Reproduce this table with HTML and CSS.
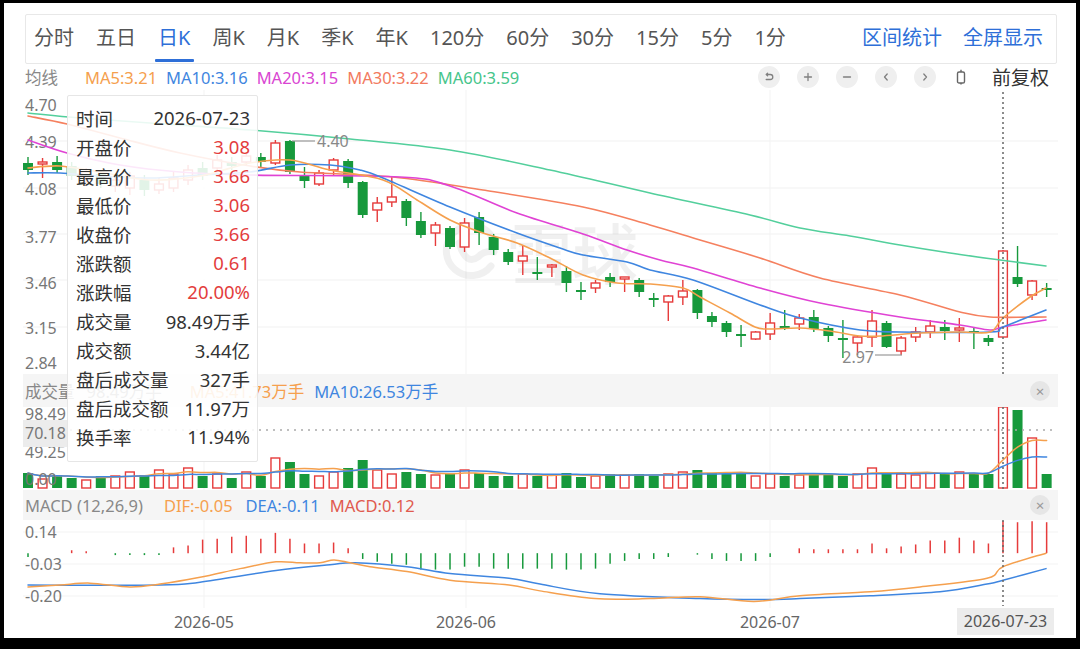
FILE: index.html
```html
<!DOCTYPE html>
<html lang="zh-CN">
<head>
<meta charset="utf-8">
<title>日K</title>
<link rel="stylesheet" href="styles.css">
</head>
<body>
<div class="frame">
  <nav class="tabs">
    <div class="tab-list">
      <span class="tab">分时</span>
      <span class="tab">五日</span>
      <span class="tab active">日K</span>
      <span class="tab">周K</span>
      <span class="tab">月K</span>
      <span class="tab">季K</span>
      <span class="tab">年K</span>
      <span class="tab">120分</span>
      <span class="tab">60分</span>
      <span class="tab">30分</span>
      <span class="tab">15分</span>
      <span class="tab">5分</span>
      <span class="tab">1分</span>
    </div>
    <div class="tab-links">
      <span class="link">区间统计</span>
      <span class="link">全屏显示</span>
    </div>
  </nav>

  <div class="legend-row">
    <div class="legend">
      <span class="legend-title">均线</span>
      <span class="c-ma5">MA5:3.21</span>
      <span class="c-ma10">MA10:3.16</span>
      <span class="c-ma20">MA20:3.15</span>
      <span class="c-ma30">MA30:3.22</span>
      <span class="c-ma60">MA60:3.59</span>
    </div>
    <div class="tools">
      <span class="tool-btn"><svg class="ico" viewBox="0 0 12 12"><path d="M3.2 3.5H7.3a2.5 2.5 0 0 1 0 5H3.2M4.6 2.1L3.2 3.5 4.6 4.9"/></svg></span>
      <span class="tool-btn"><svg class="ico" viewBox="0 0 12 12"><path d="M6 2.5v7M2.5 6h7"/></svg></span>
      <span class="tool-btn"><svg class="ico" viewBox="0 0 12 12"><path d="M2.5 6h7"/></svg></span>
      <span class="tool-btn"><svg class="ico" viewBox="0 0 12 12"><path d="M7.2 3L4.5 6l2.7 3"/></svg></span>
      <span class="tool-btn"><svg class="ico" viewBox="0 0 12 12"><path d="M4.8 3L7.5 6 4.8 9"/></svg></span>
      <span class="tool-icon"><svg class="ico-dark" viewBox="0 0 10 16"><rect x="1.5" y="3" width="7" height="11" rx="1.6"/><path d="M5 0.8v2.2M5 14v1.4"/></svg></span>
      <span class="fq">前复权</span>
    </div>
  </div>

  <div class="chart">
    <svg id="main" class="pane pane-main" viewBox="23 90 1035 284"></svg>
    <div class="band band-vol">
      <span class="band-title">成交量</span>
      <span class="c-gray vol-now">98.49万手</span>
      <span class="c-ma5 vol-ma5">MA5:41.73万手</span>
      <span class="c-ma10">MA10:26.53万手</span>
      <span class="close">×</span>
    </div>
    <svg id="vol" class="pane pane-vol" viewBox="23 407 1035 83"></svg>
    <div class="band band-macd">
      <span class="band-title">MACD (12,26,9)</span>
      <span class="c-ma5">DIF:-0.05</span>
      <span class="c-ma10">DEA:-0.11</span>
      <span class="c-macd">MACD:0.12</span>
      <span class="close">×</span>
    </div>
    <svg id="macd" class="pane pane-macd" viewBox="23 520 1035 88"></svg>
    <svg id="xaxis" class="pane pane-x" viewBox="23 608 1035 30"></svg>

    <div class="tooltip">
      <div class="tip-row"><span>时间</span><span>2026-07-23</span></div>
      <div class="tip-row"><span>开盘价</span><span class="up">3.08</span></div>
      <div class="tip-row"><span>最高价</span><span class="up">3.66</span></div>
      <div class="tip-row"><span>最低价</span><span class="up">3.06</span></div>
      <div class="tip-row"><span>收盘价</span><span class="up">3.66</span></div>
      <div class="tip-row"><span>涨跌额</span><span class="up">0.61</span></div>
      <div class="tip-row"><span>涨跌幅</span><span class="up">20.00%</span></div>
      <div class="tip-row"><span>成交量</span><span>98.49万手</span></div>
      <div class="tip-row"><span>成交额</span><span>3.44亿</span></div>
      <div class="tip-row"><span>盘后成交量</span><span>327手</span></div>
      <div class="tip-row"><span>盘后成交额</span><span>11.97万</span></div>
      <div class="tip-row"><span>换手率</span><span>11.94%</span></div>
    </div>
  </div>
</div>
<script src="script.js"></script>
</body>
</html>
```

FILE: styles.css
```css
html, body {
  margin: 0;
  padding: 0;
  background: #000;
}
body {
  width: 1080px;
  height: 649px;
  overflow: hidden;
  font-family: "Noto Sans", "Noto Sans CJK SC", sans-serif;
  color: #333;
}
.frame {
  margin: 3px 4px 0 4px;
  height: 635px;
  background: #fff;
  box-sizing: border-box;
  padding: 11px 19px 0 21px;
  display: flex;
  flex-direction: column;
  position: relative;
}

/* tabs */
.tabs {
  height: 50px;
  box-sizing: border-box;
  border: 1px solid #e8e8e8;
  border-radius: 2px;
  display: flex;
  justify-content: space-between;
  align-items: stretch;
  padding: 0 13px 0 5px;
  flex: none;
}
.tab-list {
  display: flex;
  gap: 16px;
}
.tab {
  display: flex;
  align-items: center;
  padding: 0 3px 5px;
  font-size: 20px;
  color: #555;
  position: relative;
}
.tab.active {
  color: #2e6fd8;
}
.tab.active::after {
  content: "";
  position: absolute;
  left: 0;
  right: -1px;
  bottom: 1px;
  height: 3px;
  border-radius: 1px;
  background: #2e6fd8;
}
.tab-links {
  display: flex;
  align-items: center;
  gap: 21px;
  padding-bottom: 5px;
}
.link {
  font-size: 20px;
  color: #2e6fd8;
}

/* legend row */
.legend-row {
  height: 26px;
  flex: none;
  display: flex;
  align-items: center;
  justify-content: space-between;
  padding-right: 8px;
}
.legend {
  display: flex;
  align-items: center;
  gap: 9px;
  font-size: 16.5px;
}
.legend-title {
  color: #888;
  margin-right: 18px;
}
.c-ma5 { color: #f5a04e; }
.c-ma10 { color: #3f86e0; }
.c-ma20 { color: #d946d2; }
.c-ma30 { color: #f27a5e; }
.c-ma60 { color: #46c58b; }
.c-macd { color: #e05a4e; }
.c-gray { color: #888; }

.tools {
  display: flex;
  align-items: center;
  gap: 17px;
}
.tool-btn {
  width: 22px;
  height: 22px;
  border-radius: 50%;
  background: #efefef;
  display: flex;
  align-items: center;
  justify-content: center;
}
.ico {
  width: 12px;
  height: 12px;
  fill: none;
  stroke: #808080;
  stroke-width: 1.3;
  stroke-linecap: round;
  stroke-linejoin: round;
}
.tool-icon {
  display: flex;
  margin-left: 3px;
}
.ico-dark {
  width: 10px;
  height: 16px;
  fill: none;
  stroke: #666;
  stroke-width: 1.4;
}
.fq {
  font-size: 19px;
  color: #333;
  margin-left: 9px;
}

/* chart */
.chart {
  position: relative;
  margin: 0 -1px 0 -2px;
  display: flex;
  flex-direction: column;
  flex: none;
}
.pane {
  display: block;
  width: 1035px;
  flex: none;
}
.pane-main { height: 284px; }
.pane-vol { height: 83px; }
.pane-macd { height: 88px; }
.pane-x { height: 30px; }

.band {
  height: 33px;
  flex: none;
  box-sizing: border-box;
  background: #f5f5f5;
  display: flex;
  align-items: center;
  padding: 0 8px 0 2px;
  font-size: 16.5px;
}
.band-vol .band-title { margin-right: 12px; }
.band-vol .vol-now { margin-right: 28px; }
.band-vol .vol-ma5 { margin-right: 10px; }
.band-macd {
  height: 30px;
}
.band-macd .band-title { margin-right: 21px; }
.band-macd .c-ma5 { margin-right: 13px; }
.band-macd .c-ma10 { margin-right: 10px; }
.band-title {
  color: #888;
}
.close {
  margin-left: auto;
  width: 20px;
  height: 20px;
  border-radius: 50%;
  background: #e6e6e6;
  color: #999;
  font-size: 15px;
  line-height: 20px;
  text-align: center;
}

.pane text {
  font-family: "Noto Sans", "Noto Sans CJK SC", sans-serif;
}
.axis {
  font-size: 16px;
  fill: #777;
}
.note {
  font-size: 16px;
  fill: #888;
}
.wm-text {
  font-family: "Noto Sans CJK SC", sans-serif;
  font-size: 66px;
  font-weight: 500;
  fill: #000;
  fill-opacity: 0.06;
}
.xlabel {
  font-size: 16px;
  fill: #666;
}
.xlabel-cur {
  font-size: 16px;
  fill: #555;
}

/* tooltip */
.tooltip {
  position: absolute;
  left: 44px;
  top: 5px;
  width: 191px;
  box-sizing: border-box;
  padding: 7px 7px 10px 8px;
  background: rgba(255, 255, 255, 0.88);
  border: 1px solid #e6e6e6;
  border-radius: 2px;
  font-size: 18.5px;
  color: #333;
}
.tip-row {
  height: 29px;
  display: flex;
  align-items: center;
  justify-content: space-between;
  white-space: nowrap;
}
.up {
  color: #e33d3d;
}
```

FILE: script.js
```js
(function () {
  var RED = '#e63b3b', GREEN = '#17993c';
  var ORANGE = '#f5a04e', BLUE = '#3f86e0';
  var X0 = 28, DX = 14.552;
  function X(i) { return +(X0 + i * DX).toFixed(2); }

  // [up, bodyTop, bodyBottom, wickTop, wickBottom] in pixel coords
  var candles = [
    [0,163,170,157,175],[1,162,164,158,178],[0,162,170,156,173],[0,166,176,162,180],
    [1,172,178,168,183],[0,174,184,170,188],[1,180,186,176,192],[1,176,188,172,195],
    [0,180,190,175,196],[1,184,190,178,194],[1,178,188,172,192],[1,170,180,165,185],
    [0,168,176,162,180],[1,160,168,155,172],[0,162,166,157,170],[1,156,162,152,166],
    [0,157,162,153,167],[1,143,163,140,165],[0,141,172,140,174],[0,175,181,167,188],
    [1,173,184,170,186],[1,160,170,158,176],[0,161,183,159,188],[0,182,215,181,218],
    [1,203,210,197,222],[1,197,202,177,207],[0,201,218,199,226],[0,221,235,212,238],
    [1,225,233,222,246],[0,228,247,226,249],[1,223,247,218,252],[0,217,233,212,245],
    [0,237,250,234,255],[0,252,262,249,265],[1,256,261,245,275],[0,272,274,257,280],
    [1,265,267,264,277],[0,271,283,266,292],[0,290,292,282,300],[1,283,288,280,293],
    [0,277,282,273,287],[1,277,279,277,292],[0,280,292,278,297],[0,298,300,293,307],
    [1,296,302,295,321],[1,291,297,280,305],[0,290,313,289,319],[0,316,322,312,327],
    [0,323,332,321,337],[0,334,336,325,347],[1,332,339,331,340],[1,323,334,313,340],
    [0,326,328,310,330],[1,318,324,314,330],[0,317,329,310,332],[0,328,336,326,342],
    [0,338,340,320,358],[1,337,343,336,355],[1,321,337,310,347],[0,323,347,321,348],
    [1,338,351,336,355],[1,332,337,327,342],[1,326,332,320,338],[0,327,331,320,340],
    [1,328,330,318,342],[0,331,333,328,349],[0,338,342,335,346],[1,251,337,250,337],
    [0,277,284,246,287],[1,281,295,280,300],[0,288,290,283,297]
  ];

  var vols = [15,9,13,10,8,12,12,16,13,18,14,20,12,14,10,16,12,30,26,14,12,16,20,28,18,14,16,14,13,14,
    18,15,12,12,14,12,13,15,11,12,14,13,14,12,14,16,18,15,14,16,12,14,12,13,15,14,12,14,20,16,
    14,13,15,14,16,15,14,81,78,50,14];

  var hist = [560,null,null,553,554,null,558,558,558,558,550,548,542,541,539,538,541,535,541,546,
    546,545,551,562,565,567,568,573,573,573,570,570,572,572,572,572,572,573,573,572,567,564,562,562,
    560,null,557,562,564,564,564,560,null,551,552,552,552,552,546,551,549,547,543,543,540,543,546,
    523,524,523,524];

  var MA = {
    ma60: [[28,113],[80,118],[150,123],[250,130],[350,139],[450,150],[550,170],[650,193],[750,215],
      [800,228],[850,236],[900,245],[950,253],[1000,260],[1046,266]],
    ma30: [[28,116],[67,124],[120,138],[180,153],[250,166],[300,172],[393,177],[483,190],[583,207],
      [650,225],[700,240],[760,258],[820,278],[900,295],[960,312],[990,317],[1046,317]],
    ma20: [[28,140],[67,153],[120,165],[180,172],[250,175],[400,177],[450,186],[517,213],[583,234],
      [627,250],[660,260],[693,268],[760,288],[820,303],[900,317],[960,325],[990,330],[1003,327],[1046,320]],
    ma10: [[28,173],[60,173],[100,176],[150,178],[200,175],[250,172],[290,165],[330,165],[360,170],
      [383,178],[450,207],[517,233],[560,248],[583,255],[627,262],[650,270],[693,280],[760,305],
      [800,318],[860,330],[900,332],[990,332],[1003,327],[1046,310]],
    ma5: [[28,168],[60,166],[100,172],[150,180],[200,176],[250,163],[290,160],[330,170],[383,180],
      [417,200],[450,220],[483,233],[517,243],[550,258],[583,275],[617,283],[650,284],[683,288],
      [700,297],[730,313],[755,327],[770,329],[800,328],[830,331],[860,336],[880,336],[920,333],
      [960,332],[990,332],[1003,318],[1030,297],[1046,288]]
  };
  var MA_COL = { ma60: '#53cf9c', ma30: '#f5805f', ma20: '#e043d4', ma10: BLUE, ma5: ORANGE };

  var DIF = [[28,591],[60,589],[90,587],[130,591],[160,588],[200,581],[240,572],[276,565],[300,566],
    [320,566],[334,563],[350,566],[370,570],[407,575],[450,584],[509,589],[540,595],[595,603],
    [650,603],[700,601],[754,606],[800,600],[870,596],[920,591],[987,582],[1003,570],[1046,556]];
  var DEA = [[28,589],[160,589],[200,586],[276,574],[330,568],[355,566],[407,570],[450,577],
    [509,582],[540,588],[600,598],[700,603],[760,604],[800,603],[870,600],[940,596],[987,588],
    [1003,584],[1046,572]];

  function r(n) { return Math.round(n * 100) / 100; }
  function smooth(p) {
    var d = 'M' + p[0][0] + ',' + p[0][1];
    for (var i = 0; i < p.length - 1; i++) {
      var p0 = p[i - 1] || p[i], p1 = p[i], p2 = p[i + 1], p3 = p[i + 2] || p2;
      var c1x = p1[0] + (p2[0] - p0[0]) / 6, c1y = p1[1] + (p2[1] - p0[1]) / 6;
      var c2x = p2[0] - (p3[0] - p1[0]) / 6, c2y = p2[1] - (p3[1] - p1[1]) / 6;
      d += ' C' + r(c1x) + ',' + r(c1y) + ' ' + r(c2x) + ',' + r(c2y) + ' ' + p2[0] + ',' + p2[1];
    }
    return d;
  }
  function path(d, col, w) {
    return '<path d="' + d + '" fill="none" stroke="' + col + '" stroke-width="' + (w || 1.6) + '" stroke-linejoin="round" stroke-linecap="round"/>';
  }
  function line(x1, y1, x2, y2, c, w, extra) {
    return '<line x1="' + x1 + '" y1="' + y1 + '" x2="' + x2 + '" y2="' + y2 + '" stroke="' + c + '" stroke-width="' + (w || 1) + '"' + (extra || '') + '/>';
  }
  function text(x, y, s, cls, anchor) {
    return '<text x="' + x + '" y="' + y + '" class="' + cls + '" text-anchor="' + (anchor || 'start') + '" dominant-baseline="central">' + s + '</text>';
  }
  var VGRID = [204, 466, 770];
  var DOT_V = ' stroke-dasharray="2 3"';

  /* ---------- main pane ---------- */
  var m = '';
  [141, 188, 234, 280, 327].forEach(function (y) { m += line(23, y, 1058, y, '#f1f1f1', 1); });
  VGRID.forEach(function (x) { m += line(x, 90, x, 374, '#f3f3f3', 1); });
  [['4.70', 105], ['4.39', 142], ['4.08', 189], ['3.77', 237], ['3.46', 283], ['3.15', 328], ['2.84', 363]]
    .forEach(function (a) { m += text(25, a[1], a[0], 'axis'); });
  // watermark
  m += '<g fill="none" stroke="#000" stroke-opacity="0.06" stroke-width="7" stroke-linecap="round">' +
    '<path d="M490.5 234.5A25 25 0 1 0 491 266"/>' +
    '<path d="M459 243Q466 266 478 257Q485 250 494 252"/></g>';
  m += '<text x="506" y="253" class="wm-text" dominant-baseline="central">雪球</text>';
  // candles
  candles.forEach(function (c, i) {
    var x = X(i), up = c[0], t = c[1], b = c[2], wt = c[3], wb = c[4];
    if (b - t < 1.6) { var mid = (t + b) / 2; t = mid - 0.8; b = mid + 0.8; }
    var col = up ? RED : GREEN;
    if (wt < t) m += line(x, wt, x, t, col, 1.4);
    if (wb > b) m += line(x, b, x, wb, col, 1.4);
    if (up) m += '<rect x="' + r(x - 4.4) + '" y="' + t + '" width="8.8" height="' + r(b - t) + '" fill="#fff" stroke="' + col + '" stroke-width="1.4"/>';
    else m += '<rect x="' + r(x - 5) + '" y="' + t + '" width="10" height="' + r(b - t) + '" fill="' + col + '"/>';
  });
  ['ma60', 'ma30', 'ma20', 'ma10', 'ma5'].forEach(function (k) { m += path(smooth(MA[k]), MA_COL[k], 1.6); });
  m += line(292, 141, 315, 141, '#999', 1.2) + text(317, 141, '4.40', 'note');
  m += line(875, 355, 902, 355, '#999', 1.2) + text(874, 357, '2.97', 'note', 'end');
  m += line(1003, 92, 1003, 374, '#666', 1.5, DOT_V);
  document.getElementById('main').innerHTML = m;

  /* ---------- volume pane ---------- */
  var v = '';
  VGRID.forEach(function (x) { v += line(x, 407, x, 490, '#f3f3f3', 1); });
  v += text(25, 414, '98.49', 'axis');
  v += text(25, 452, '49.25', 'axis');
  v += '<rect x="23" y="420" width="47" height="27" fill="#ececec"/>';
  v += text(25, 433, '70.18', 'axis');
  var BASE = 488;
  vols.forEach(function (h, i) {
    var x = X(i), up = candles[i][0], col = up ? RED : GREEN;
    if (up) v += '<rect x="' + r(x - 4.4) + '" y="' + (BASE - h) + '" width="8.8" height="' + h + '" fill="#fff" stroke="' + col + '" stroke-width="1.4"/>';
    else v += '<rect x="' + r(x - 5) + '" y="' + (BASE - h) + '" width="10" height="' + h + '" fill="' + col + '"/>';
  });
  function volMA(n) {
    var pts = [];
    vols.forEach(function (h, i) {
      var s = 0, c = 0;
      for (var j = Math.max(0, i - n + 1); j <= i; j++) { s += vols[j]; c++; }
      pts.push([X(i), r(BASE - s / c)]);
    });
    return pts;
  }
  v += path(smooth(volMA(5)), ORANGE, 1.5);
  v += path(smooth(volMA(10)), BLUE, 1.5);
  v += text(25, 479, '0.00', 'axis');
  v += line(70, 430, 1052, 430, '#aaa', 1.3, ' stroke-dasharray="2 5"');
  v += line(1003, 407, 1003, 490, '#666', 1.5, DOT_V);
  document.getElementById('vol').innerHTML = v;

  /* ---------- MACD pane ---------- */
  function T(y) { return r(470 + (y - 470) * 0.967); }
  var mc = '';
  [532, 564, 596].forEach(function (y) { mc += line(23, y, 1058, y, '#f3f3f3', 1); });
  VGRID.forEach(function (x) { mc += line(x, 520, x, 608, '#f3f3f3', 1); });
  mc += text(25, 532, '0.14', 'axis');
  mc += text(25, 564, '-0.03', 'axis');
  mc += text(25, 596, '-0.20', 'axis');
  var base = T(556);
  hist.forEach(function (y, i) {
    if (y === null) return;
    var col = y < 556 ? RED : GREEN;
    var yy = T(y);
    if (Math.abs(yy - base) < 1.5) yy = y < 556 ? base - 1.5 : base + 1.5;
    mc += line(X(i), base, X(i), yy, col, 1.5);
  });
  mc += path(smooth(DEA.map(function (p) { return [p[0], T(p[1])]; })), BLUE, 1.5);
  mc += path(smooth(DIF.map(function (p) { return [p[0], T(p[1])]; })), ORANGE, 1.5);
  mc += line(1003, 520, 1003, 606, '#666', 1.5, DOT_V);
  document.getElementById('macd').innerHTML = mc;

  /* ---------- x axis ---------- */
  var xa = '';
  xa += text(204, 622, '2026-05', 'xlabel', 'middle');
  xa += text(466, 622, '2026-06', 'xlabel', 'middle');
  xa += text(770, 622, '2026-07', 'xlabel', 'middle');
  xa += '<rect x="957" y="608" width="97" height="27" fill="#ececec"/>';
  xa += text(1005.5, 621, '2026-07-23', 'xlabel-cur', 'middle');
  document.getElementById('xaxis').innerHTML = xa;
})();
```
